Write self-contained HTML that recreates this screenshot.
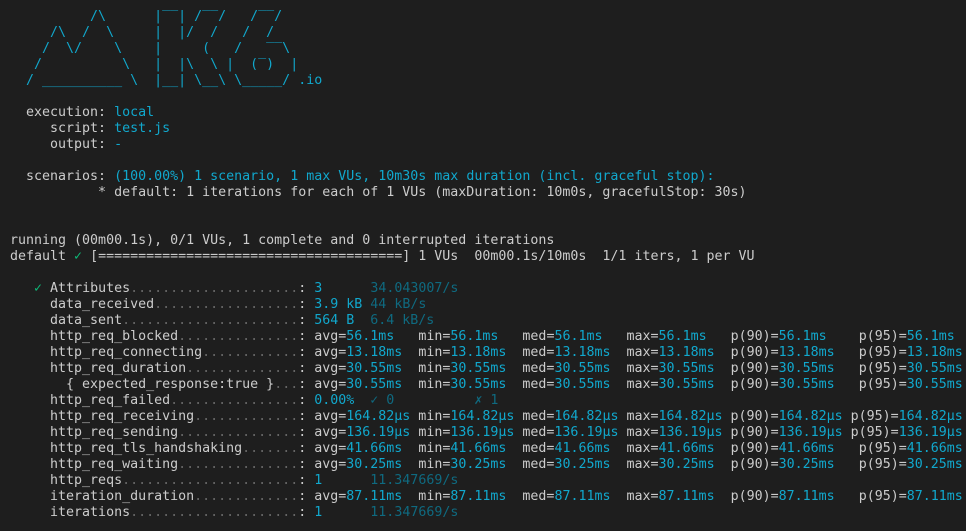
<!DOCTYPE html>
<html><head><meta charset="utf-8"><style>
html,body{margin:0;padding:0;background:#1e1e1e;width:966px;height:531px;overflow:hidden}
pre{margin:0;padding:9px 0 0 10px;font-family:"DejaVu Sans Mono","Liberation Mono",monospace;font-size:13.3px;line-height:16px;color:#cccccc;white-space:pre}
.c{color:#11a8cd}.d{color:#666666}.r{color:#0f6a80}.g{color:#0dbc79}.dg{color:#0a7a50}
</style></head><body><pre><span class="c">          /\      |‾‾| /‾‾/   /‾‾/
     /\  /  \     |  |/  /   /  /
    /  \/    \    |     (   /   ‾‾\
   /          \   |  |\  \ |  (‾)  |
  / __________ \  |__| \__\ \_____/ .io</span>

  execution: <span class="c">local</span>
     script: <span class="c">test.js</span>
     output: <span class="c">-</span>

  scenarios: <span class="c">(100.00%) 1 scenario, 1 max VUs, 10m30s max duration (incl. graceful stop):</span>
           * default: 1 iterations for each of 1 VUs (maxDuration: 10m0s, gracefulStop: 30s)


running (00m00.1s), 0/1 VUs, 1 complete and 0 interrupted iterations
default <span class="g">✓</span> [======================================] 1 VUs  00m00.1s/10m0s  1/1 iters, 1 per VU

   <span class="g">✓</span> Attributes<span class="d">.....................</span>: <span class="c">3</span>      <span class="r">34.043007/s</span>
     data_received<span class="d">..................</span>: <span class="c">3.9 kB</span> <span class="r">44 kB/s</span>
     data_sent<span class="d">......................</span>: <span class="c">564 B</span>  <span class="r">6.4 kB/s</span>
     http_req_blocked<span class="d">...............</span>: avg=<span class="c">56.1ms</span>   min=<span class="c">56.1ms</span>   med=<span class="c">56.1ms</span>   max=<span class="c">56.1ms</span>   p(90)=<span class="c">56.1ms</span>    p(95)=<span class="c">56.1ms</span>
     http_req_connecting<span class="d">............</span>: avg=<span class="c">13.18ms</span>  min=<span class="c">13.18ms</span>  med=<span class="c">13.18ms</span>  max=<span class="c">13.18ms</span>  p(90)=<span class="c">13.18ms</span>   p(95)=<span class="c">13.18ms</span>
     http_req_duration<span class="d">..............</span>: avg=<span class="c">30.55ms</span>  min=<span class="c">30.55ms</span>  med=<span class="c">30.55ms</span>  max=<span class="c">30.55ms</span>  p(90)=<span class="c">30.55ms</span>   p(95)=<span class="c">30.55ms</span>
       { expected_response:true }<span class="d">...</span>: avg=<span class="c">30.55ms</span>  min=<span class="c">30.55ms</span>  med=<span class="c">30.55ms</span>  max=<span class="c">30.55ms</span>  p(90)=<span class="c">30.55ms</span>   p(95)=<span class="c">30.55ms</span>
     http_req_failed<span class="d">................</span>: <span class="c">0.00%</span>  <span class="r">✓ 0</span>          <span class="r">✗ 1</span>
     http_req_receiving<span class="d">.............</span>: avg=<span class="c">164.82µs</span> min=<span class="c">164.82µs</span> med=<span class="c">164.82µs</span> max=<span class="c">164.82µs</span> p(90)=<span class="c">164.82µs</span> p(95)=<span class="c">164.82µs</span>
     http_req_sending<span class="d">...............</span>: avg=<span class="c">136.19µs</span> min=<span class="c">136.19µs</span> med=<span class="c">136.19µs</span> max=<span class="c">136.19µs</span> p(90)=<span class="c">136.19µs</span> p(95)=<span class="c">136.19µs</span>
     http_req_tls_handshaking<span class="d">.......</span>: avg=<span class="c">41.66ms</span>  min=<span class="c">41.66ms</span>  med=<span class="c">41.66ms</span>  max=<span class="c">41.66ms</span>  p(90)=<span class="c">41.66ms</span>   p(95)=<span class="c">41.66ms</span>
     http_req_waiting<span class="d">...............</span>: avg=<span class="c">30.25ms</span>  min=<span class="c">30.25ms</span>  med=<span class="c">30.25ms</span>  max=<span class="c">30.25ms</span>  p(90)=<span class="c">30.25ms</span>   p(95)=<span class="c">30.25ms</span>
     http_reqs<span class="d">......................</span>: <span class="c">1</span>      <span class="r">11.347669/s</span>
     iteration_duration<span class="d">.............</span>: avg=<span class="c">87.11ms</span>  min=<span class="c">87.11ms</span>  med=<span class="c">87.11ms</span>  max=<span class="c">87.11ms</span>  p(90)=<span class="c">87.11ms</span>   p(95)=<span class="c">87.11ms</span>
     iterations<span class="d">.....................</span>: <span class="c">1</span>      <span class="r">11.347669/s</span></pre></body></html>
